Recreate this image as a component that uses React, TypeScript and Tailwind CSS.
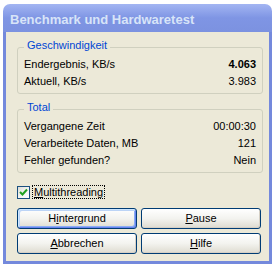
import React from 'react';

const font = { fontFamily: '"Liberation Sans", Arial, sans-serif' };

const Row: React.FC<{ label: string; value: string; bold?: boolean }> = ({ label, value, bold }) => (
  <div className="flex h-[17px] items-center justify-between leading-[17px]">
    <span>{label}</span>
    <span className={bold ? 'font-bold' : ''}>{value}</span>
  </div>
);

const Group: React.FC<{ title: string; children: React.ReactNode; className?: string }> = ({
  title,
  children,
  className
}) => (
  <div className={`relative w-[246px] rounded-[3px] border border-[#d0d0bf] pl-[6px] pr-[6px] pt-[8px] pb-[3px] ${className ?? ''}`}>
    <span className="absolute -top-[9px] left-[6px] bg-[#ece9d8] px-[3px] leading-[13px] text-[#0046d5]">
      {title}
    </span>
    {children}
  </div>
);

const XpButton: React.FC<{ children: React.ReactNode; focused?: boolean }> = ({ children, focused }) => (
  <button
    className={`h-[21px] w-[120px] rounded-[3px] border border-[#003c74] bg-gradient-to-b from-[#ffffff] via-[#f3f3ef] to-[#dedbd0] text-[11px] leading-[19px] text-black ${
      focused
        ? 'shadow-[inset_1px_1px_0_#cee7ff,inset_-1px_-1px_0_#6982ee,inset_2px_2px_0_#bcd4f6,inset_-2px_-2px_0_#89adf4]'
        : 'shadow-[inset_-1px_-1px_0_#d6d0c5]'
    }`}
    style={font}
  >
    {children}
  </button>
);

export default function App() {
  return (
    <div className="h-[267px] w-[278px] bg-white pl-[3px] pt-[4px]" style={font}>
      <div className="flex h-[260px] w-[269px] flex-col">
        {/* title bar */}
        <div className="flex h-[28px] items-center rounded-t-[7px] bg-gradient-to-b from-[#a3b5f2] via-[#7f95e4] to-[#7c92e0] pl-[7px] pt-[3px]">
          <span className="text-[13px] font-bold text-[#d8e4f8]">Benchmark und Hardwaretest</span>
        </div>

        {/* body */}
        <div className="flex flex-1 flex-col border-x-[3px] border-b-[3px] border-[#7489dc] bg-[#ece9d8] pl-[11px] pt-[15px] text-[11px] text-black">
          <Group title="Geschwindigkeit">
            <Row label="Endergebnis, KB/s" value="4.063" bold />
            <Row label="Aktuell, KB/s" value="3.983" />
          </Group>

          <Group title="Total" className="mt-[15px]">
            <Row label="Vergangene Zeit" value="00:00:30" />
            <Row label="Verarbeitete Daten, MB" value="121" />
            <Row label="Fehler gefunden?" value="Nein" />
          </Group>

          <div className="mt-[12px] flex h-[14px] items-center">
            <span className="flex h-[13px] w-[13px] items-center justify-center border border-[#1c5180] bg-gradient-to-br from-[#dcdcd7] via-[#f4f4f1] to-white">
              <svg width="9" height="9" viewBox="0 0 9 9">
                <path d="M1 4 L3.5 6.5 L8 1.5" fill="none" stroke="#21a121" strokeWidth="2" />
              </svg>
            </span>
            <span className="ml-[2px] border border-dotted border-black px-[1px] leading-[12px]">
              <u>M</u>ultithreading
            </span>
          </div>

          <div className="mt-[9px] grid w-[244px] grid-cols-2 gap-x-[4px] gap-y-[4px]">
            <XpButton focused>
              H<u>i</u>ntergrund
            </XpButton>
            <XpButton>
              <u>P</u>ause
            </XpButton>
            <XpButton>
              <u>A</u>bbrechen
            </XpButton>
            <XpButton>
              <u>H</u>ilfe
            </XpButton>
          </div>
        </div>
      </div>
    </div>
  );
}
